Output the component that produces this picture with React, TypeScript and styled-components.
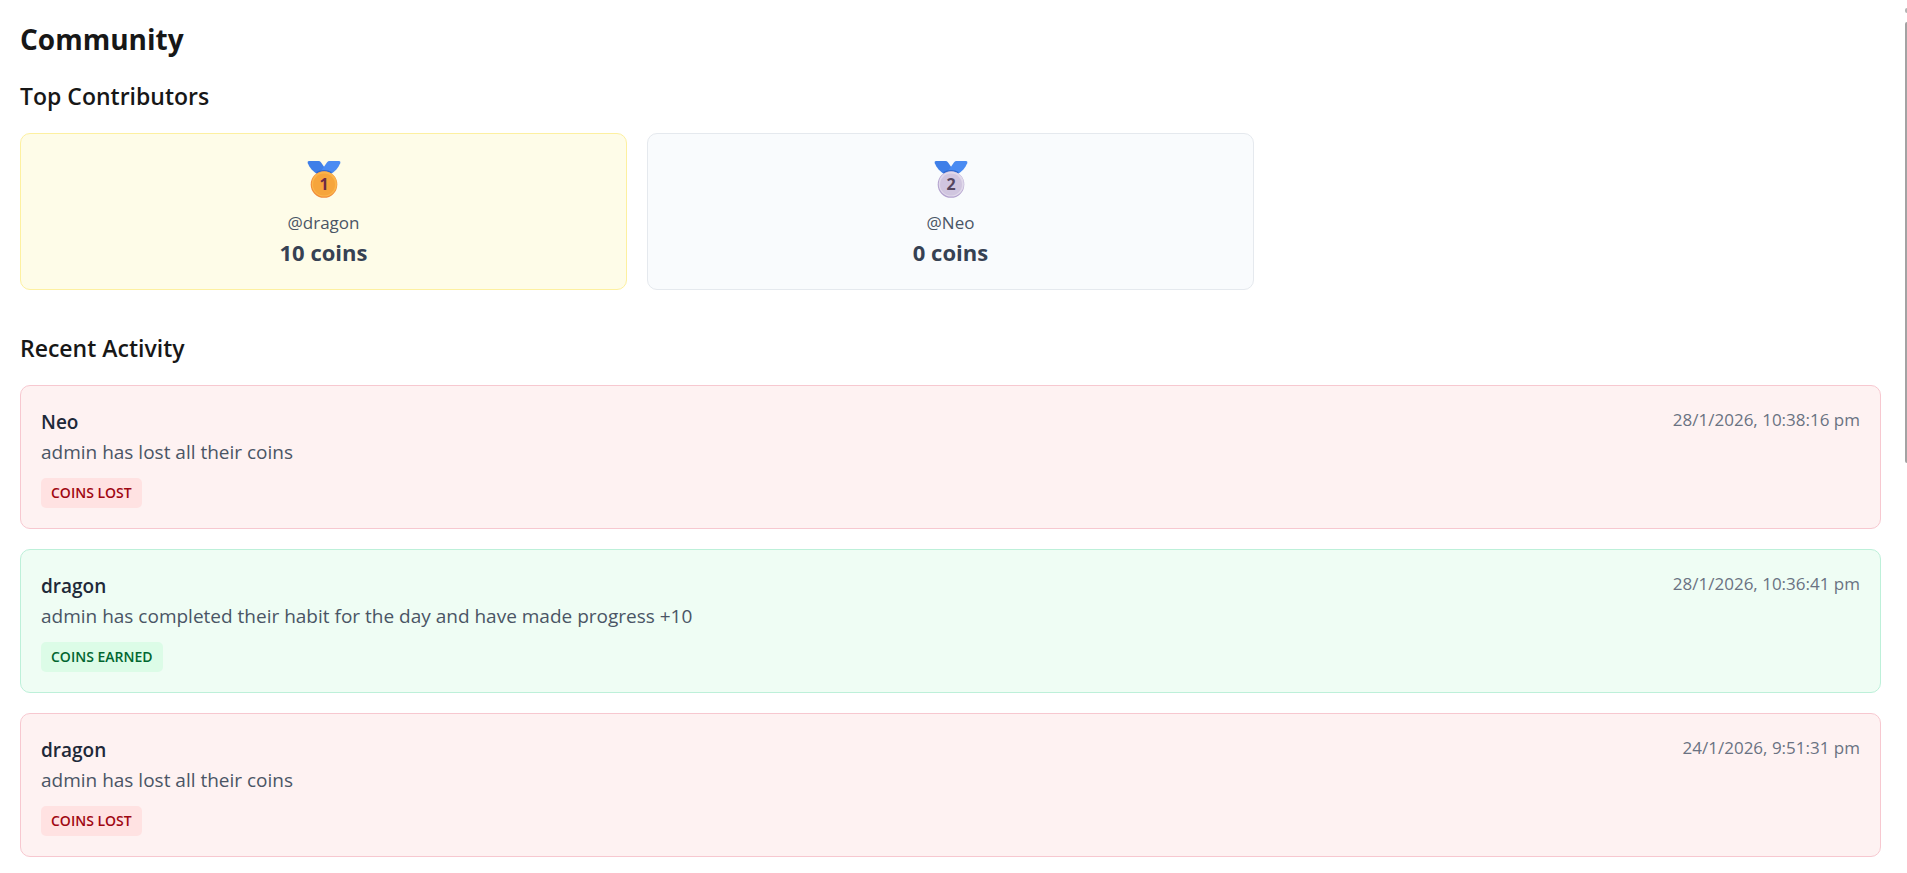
import React from 'react';
import styled, { createGlobalStyle } from 'styled-components';

const GlobalStyle = createGlobalStyle`
  *, *::before, *::after { box-sizing: border-box; }
  body {
    margin: 0;
    background: #fff;
    color: #171717;
    font-family: "Segoe UI", "Open Sans", "Noto Sans", sans-serif;
  }
  h1, h2, h3, p, ul { margin: 0; padding: 0; }
`;

type Tone = 'gold' | 'silver';
type Kind = 'lost' | 'earned';

const rankColors = {
  gold: { background: '#fefce8', border: '#fdf0a0' },
  silver: { background: '#f9fbfd', border: '#e5e9ee' },
};

const activityColors = {
  lost: { background: '#fef2f2', border: '#f7c8d0', badge: '#ffe2e2', text: '#9f0712', label: 'COINS LOST' },
  earned: { background: '#effdf4', border: '#bdf0d9', badge: '#dcfce7', text: '#016630', label: 'COINS EARNED' },
};

const Page = styled.main`
  padding: 19px 26px 20px 20px;
`;

const Title = styled.h1`
  margin-bottom: 20px;
  font-size: 28px;
  font-weight: 700;
  line-height: 40px;
`;

const SectionTitle = styled.h2`
  margin-bottom: 19px;
  font-size: 23px;
  font-weight: 600;
  line-height: 35px;
`;

const Contributors = styled.section`
  margin-bottom: 41px;
`;

const RankGrid = styled.ul`
  display: grid;
  grid-template-columns: repeat(3, minmax(0, 1fr));
  gap: 20px;
  list-style: none;
`;

const RankCard = styled.li<{ $tone: Tone }>`
  display: flex;
  flex-direction: column;
  align-items: center;
  padding: 20px 20px 19px;
  border: 1px solid ${({ $tone }) => rankColors[$tone].border};
  border-radius: 10px;
  background: ${({ $tone }) => rankColors[$tone].background};
`;

const MedalIcon = styled.svg`
  display: block;
  margin-bottom: 11px;
`;

const Handle = styled.p`
  color: #4a5565;
  font-size: 17px;
  line-height: 25px;
`;

const Coins = styled.p`
  color: #364153;
  font-size: 22px;
  font-weight: 700;
  line-height: 35px;
`;

const Feed = styled.ul`
  display: flex;
  flex-direction: column;
  gap: 20px;
  list-style: none;
`;

const FeedCard = styled.li<{ $kind: Kind }>`
  display: flex;
  align-items: flex-start;
  justify-content: space-between;
  gap: 20px;
  padding: 21px 20px 20px;
  border: 1px solid ${({ $kind }) => activityColors[$kind].border};
  border-radius: 10px;
  background: ${({ $kind }) => activityColors[$kind].background};
`;

const UserName = styled.h3`
  color: #1e2939;
  font-size: 19px;
  font-weight: 600;
  line-height: 30px;
`;

const Message = styled.p`
  color: #4a5565;
  font-size: 19px;
  line-height: 30px;
`;

const Badge = styled.span<{ $kind: Kind }>`
  display: block;
  width: fit-content;
  margin-top: 11px;
  padding: 5px 10px;
  border-radius: 5px;
  background: ${({ $kind }) => activityColors[$kind].badge};
  color: ${({ $kind }) => activityColors[$kind].text};
  font-size: 14px;
  font-weight: 600;
  line-height: 20px;
`;

const Timestamp = styled.time`
  color: #6a7282;
  font-size: 17px;
  line-height: 25px;
  white-space: nowrap;
`;

const ScrollRail = styled.div`
  position: fixed;
  top: 0;
  right: 0;
  width: 2px;
  height: 53%;
  padding-top: 8px;
`;

const ScrollArrow = styled.div`
  height: 5px;
  margin-bottom: 9px;
  border-radius: 2px 0 0 2px;
  background: #b4b4b4;
`;

const ScrollThumb = styled.div`
  height: calc(100% - 14px);
  border-radius: 2px 0 0 2px;
  background: #a3a3a3;
`;

const medalColors = {
  gold: { rim: '#f08c3a', face: '#f6a53c', edge: '#fbb54b', digit: '#6d2b45' },
  silver: { rim: '#b3a2ce', face: '#d0c5df', edge: '#e0d8ea', digit: '#55465f' },
};

function Medal({ tone, rank }: { tone: Tone; rank: number }) {
  const c = medalColors[tone];
  return (
    <MedalIcon width="34" height="45" viewBox="0 0 34 45" role="img" aria-label={`Rank ${rank}`}>
      <path d="M2 7h9.500c1 0 1.800.4 2.400 1.200L20 17l-3 5-6.500-1.500C6 17.500 2.500 13.500.8 9.200.3 7.900 1 7 2 7z" fill="#3f7fe8" />
      <path d="M32 7h-9.500c-1 0-1.800.4-2.400 1.200L14 17l3 5 6.500-1.500c4.500-3 8-7 9.700-11.300C33.700 7.900 33 7 32 7z" fill="#4a8bf2" />
      <path d="M10 19.500c3-3.500 11-3.500 14 0l.6-1.500c-4-2.700-11.200-2.700-15.200 0z" fill="#2f68cc" />
      <circle cx="17" cy="30.500" r="13.300" fill={c.rim} />
      <circle cx="17.300" cy="30" r="12.600" fill={c.edge} />
      <circle cx="17" cy="30.500" r="11" fill={c.face} />
      <text x="17" y="36" textAnchor="middle" fontFamily="Open Sans, sans-serif" fontSize="16" fontWeight="700" fill={c.digit}>
        {rank}
      </text>
    </MedalIcon>
  );
}

const contributors: { tone: Tone; handle: string; coins: number }[] = [
  { tone: 'gold', handle: 'dragon', coins: 10 },
  { tone: 'silver', handle: 'Neo', coins: 0 },
];

const activity: { user: string; message: string; kind: Kind; at: string }[] = [
  { user: 'Neo', message: 'admin has lost all their coins', kind: 'lost', at: '28/1/2026, 10:38:16 pm' },
  {
    user: 'dragon',
    message: 'admin has completed their habit for the day and have made progress +10',
    kind: 'earned',
    at: '28/1/2026, 10:36:41 pm',
  },
  { user: 'dragon', message: 'admin has lost all their coins', kind: 'lost', at: '24/1/2026, 9:51:31 pm' },
];

export default function App() {
  return (
    <>
      <GlobalStyle />
      <Page>
        <Title>Community</Title>
        <Contributors>
          <SectionTitle>Top Contributors</SectionTitle>
          <RankGrid>
            {contributors.map((c, i) => (
              <RankCard key={c.handle} $tone={c.tone}>
                <Medal tone={c.tone} rank={i + 1} />
                <Handle>@{c.handle}</Handle>
                <Coins>{c.coins} coins</Coins>
              </RankCard>
            ))}
          </RankGrid>
        </Contributors>
        <section>
          <SectionTitle>Recent Activity</SectionTitle>
          <Feed>
            {activity.map((a) => (
              <FeedCard key={a.at} $kind={a.kind}>
                <div>
                  <UserName>{a.user}</UserName>
                  <Message>{a.message}</Message>
                  <Badge $kind={a.kind}>{activityColors[a.kind].label}</Badge>
                </div>
                <Timestamp>{a.at}</Timestamp>
              </FeedCard>
            ))}
          </Feed>
        </section>
      </Page>
      <ScrollRail aria-hidden="true">
        <ScrollArrow />
        <ScrollThumb />
      </ScrollRail>
    </>
  );
}
